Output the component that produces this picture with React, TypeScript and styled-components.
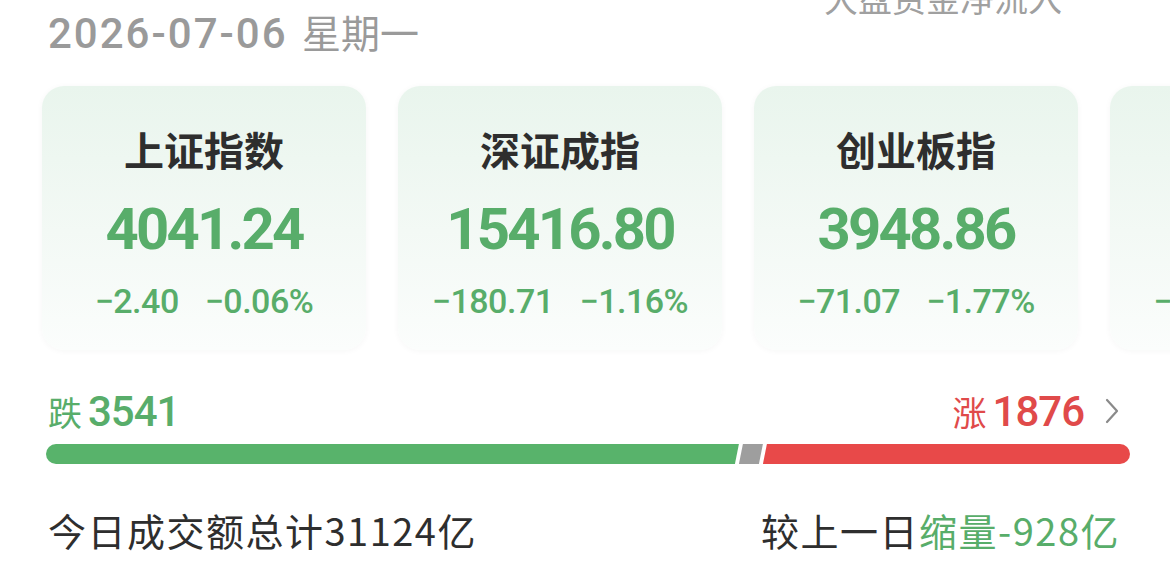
import styled, { createGlobalStyle } from "styled-components";

const GlobalStyle = createGlobalStyle`
  html, body {
    margin: 0;
    padding: 0;
    background: #ffffff;
  }
  body {
    font-family: "Roboto", "Noto Sans CJK SC", sans-serif;
    overflow: hidden;
  }
`;

type IndexCard = {
    name: string;
    value: string;
    change: string;
    percent: string;
};

const indices: IndexCard[] = [
    {name: "上证指数", value: "4041.24", change: "−2.40", percent: "−0.06%"},
    {name: "深证成指", value: "15416.80", change: "−180.71", percent: "−1.16%"},
    {name: "创业板指", value: "3948.86", change: "−71.07", percent: "−1.77%"},
    {name: "科创综指", value: "1520.38", change: "−20.15", percent: "−1.45%"},
];

const down = 3541;
const up = 1876;

export default function App() {
    return (
        <>
            <GlobalStyle/>
            <Page>
                <Header>
                    <DateText>2026-07-06 <Weekday>星期一</Weekday></DateText>
                    <FlowLabel>大盘资金净流入</FlowLabel>
                </Header>
                <CardRow>
                    {indices.map((item) => (
                        <Card key={item.name}>
                            <CardTitle>{item.name}</CardTitle>
                            <CardValue>{item.value}</CardValue>
                            <CardChange>
                                <span>{item.change}</span>
                                <span>{item.percent}</span>
                            </CardChange>
                        </Card>
                    ))}
                </CardRow>
                <Breadth>
                    <Count $tone="down"><CountLabel>跌</CountLabel>{down}</Count>
                    <BreadthRight>
                        <Count $tone="up"><CountLabel>涨</CountLabel>{up}</Count>
                        <Chevron viewBox="0 0 16 28" aria-hidden>
                            <path d="M3 3 L13 14 L3 25" fill="none" stroke="#8a8a8a" strokeWidth="2.2"
                                  strokeLinecap="round" strokeLinejoin="round"/>
                        </Chevron>
                    </BreadthRight>
                </Breadth>
                <Bar>
                    <DownPart style={{flexGrow: down}}/>
                    <FlatPart/>
                    <UpPart style={{flexGrow: up}}/>
                </Bar>
                <Turnover>
                    <span>今日成交额总计31124亿</span>
                    <span>较上一日<Shrink>缩量-928亿</Shrink></span>
                </Turnover>
            </Page>
        </>
    );
}

const Page = styled.div`
    width: 1170px;
    height: 577px;
    box-sizing: border-box;
    padding: 0 40px 0 42px;
    overflow: hidden;
`
const Header = styled.div`
    display: flex;
    justify-content: space-between;
    align-items: flex-start;
    height: 86px;
    padding-left: 6px;
    padding-right: 68px;
`
const DateText = styled.div`
    margin-top: 6px;
    font-size: 42px;
    font-weight: 500;
    color: #9a9a9a;
    letter-spacing: 2px;
    line-height: 50px;
`
const Weekday = styled.span`
    font-family: "Noto Sans CJK SC", sans-serif;
    font-size: 39px;
    font-weight: 400;
    letter-spacing: 0;
    margin-left: 2px;
`
const FlowLabel = styled.div`
    margin-top: -26px;
    font-family: "Noto Sans CJK SC", sans-serif;
    font-size: 34px;
    color: #a0a0a0;
    line-height: 48px;
`
const CardRow = styled.div`
    display: flex;
    gap: 32px;
    width: 1200px;
`
const Card = styled.div`
    flex: 0 0 324px;
    height: 264px;
    box-sizing: border-box;
    border-radius: 22px;
    background: linear-gradient(180deg, #e9f5ed 0%, #f3f9f5 55%, #fbfdfc 100%);
    box-shadow: 0 1px 6px rgba(0, 40, 20, 0.04);
    display: flex;
    flex-direction: column;
    align-items: center;
    padding-top: 35px;
`
const CardTitle = styled.div`
    font-family: "Noto Sans CJK SC", sans-serif;
    font-size: 40px;
    font-weight: 700;
    color: #2e2e2e;
    line-height: 56px;
`
const CardValue = styled.div`
    margin-top: 18px;
    font-size: 58px;
    font-weight: 700;
    color: #58ad6a;
    letter-spacing: -2.8px;
    line-height: 68px;
`
const CardChange = styled.div`
    margin-top: 18px;
    display: flex;
    gap: 26px;
    font-size: 34px;
    font-weight: 500;
    color: #58ad6a;
    line-height: 40px;
    letter-spacing: -0.5px;
`
const Breadth = styled.div`
    margin-top: 36px;
    padding: 0 10px 0 6px;
    display: flex;
    justify-content: space-between;
    align-items: center;
    height: 50px;
`
const BreadthRight = styled.div`
    display: flex;
    align-items: center;
    gap: 20px;
`
const Count = styled.div<{ $tone: "up" | "down" }>`
    font-size: 42px;
    font-weight: 500;
    color: ${(p) => (p.$tone === "up" ? "#e04a4a" : "#58ad6a")};
    letter-spacing: -1px;
`
const CountLabel = styled.span`
    font-family: "Noto Sans CJK SC", sans-serif;
    font-size: 34px;
    font-weight: 400;
    letter-spacing: 0;
    margin-right: 6px;
`
const Chevron = styled.svg`
    width: 16px;
    height: 28px;
`
const Bar = styled.div`
    margin: 8px 0 0 4px;
    display: flex;
    height: 20px;
`
const DownPart = styled.div`
    flex-basis: 0;
    background: #58b36b;
    border-radius: 10px 0 0 10px;
    clip-path: polygon(0 0, 100% 0, calc(100% - 4px) 100%, 0 100%);
`
const FlatPart = styled.div`
    flex: 0 0 24px;
    background: #9e9e9e;
    clip-path: polygon(4px 0, 100% 0, calc(100% - 4px) 100%, 0 100%);
`
const UpPart = styled.div`
    flex-basis: 0;
    background: #e84949;
    border-radius: 0 10px 10px 0;
    clip-path: polygon(4px 0, 100% 0, 100% 100%, 0 100%);
`
const Turnover = styled.div`
    margin-top: 42px;
    padding: 0 10px 0 6px;
    display: flex;
    justify-content: space-between;
    font-family: "Noto Sans CJK SC", sans-serif;
    font-size: 38px;
    letter-spacing: 1.5px;
    color: #2e2e2e;
    line-height: 48px;
`
const Shrink = styled.span`
    color: #58ad6a;
`
